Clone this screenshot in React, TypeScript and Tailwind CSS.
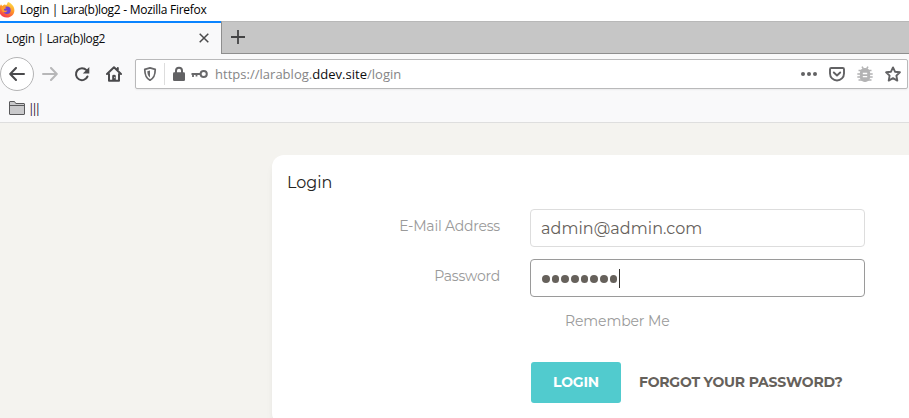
import React from "react";

function FirefoxLogo() {
  return (
    <svg width="17" height="17" viewBox="0 0 17 17" className="-ml-[2px] -mt-[3px] shrink-0">
      <defs>
        <linearGradient id="fire" x1="0.8" y1="0" x2="0.3" y2="1">
          <stop offset="0" stopColor="#ffe34a" />
          <stop offset="0.45" stopColor="#ff9a28" />
          <stop offset="1" stopColor="#f5334f" />
        </linearGradient>
      </defs>
      <path d="M3 3.2 4.2 5 6.3 3.6 8.5 4 10 1c3.6 1.4 6.4 4.4 6.4 8.2 0 4.2-3.3 7.3-7.6 7.3S1.100 13.300 1.100 9.200C1.100 7 1.900 5 3 3.200Z" fill="url(#fire)" />
      <circle cx="9" cy="9.200" r="3.700" fill="#7542d0" />
      <path d="M3.500 6.300c1.800-.8 3.700-.5 5 .9-1.600.1-2.500.7-2.600 1.700 1.300 1.300 2.700.6 3.600.7-.8 1.800-3 2.300-4.800 1.100C3.500 9.500 3.100 7.800 3.500 6.300Z" fill="#ff9b2c" />
    </svg>
  );
}

function TitleBar() {
  return (
    <div className="flex h-[21px] items-center bg-white">
      <FirefoxLogo />
      <span className="-mt-px ml-[5px] text-[12px] leading-[20px] tracking-[-0.28px] text-black">Login | Lara(b)log2 - Mozilla Firefox</span>
    </div>
  );
}

function TabStrip() {
  return (
    <div className="flex h-[33px]">
      <div className="flex w-[221px] items-center border-t-[2px] border-[#0a84ff] bg-[#f9f9fa] pl-[6px]">
        <span className="text-[12px] tracking-[-0.35px] text-[#0c0c0d]">Login | Lara(b)log2</span>
        <svg width="10" height="10" viewBox="0 0 10 10" className="-mt-px ml-auto mr-[12px]" stroke="#4a4a4b" strokeWidth="1.5" fill="none">
          <path d="M.7.7 9.300 9.300M9.300.7.7 9.300" />
        </svg>
      </div>
      <div className="flex flex-1 items-center border-y border-l border-t-[#b8b8b8] border-b-[#8e8e8e] border-l-[#8e8e8e] bg-[#c6c6c6] pl-[9px]">
        <svg width="14" height="14" viewBox="0 0 14 14" className="-mt-px" stroke="#434344" strokeWidth="1.800" fill="none">
          <path d="M7 0v14M0 7h14" />
        </svg>
      </div>
    </div>
  );
}

function AddressField() {
  return (
    <div className="ml-[13px] mr-px flex h-[30px] flex-1 items-center rounded-[2px] border border-[#b9b9ba] bg-white shadow-[0_1px_2px_rgba(0,0,0,0.06)]">
      <svg width="14" height="16" viewBox="0 0 14 16" className="ml-[7px]" fill="none">
        <path d="M7 1.800 12.200 3.300c0 5.200-.7 8.500-5.200 10.900C2.500 11.800 1.800 8.500 1.800 3.300Z" stroke="#68686a" strokeWidth="1.800" strokeLinejoin="round" />
        <path d="M7 4.500v7C5 10 4.400 8.300 4.300 5.200Z" fill="#68686a" />
      </svg>
      <span className="ml-[7px] h-[22px] w-px bg-[#dddddd]" />
      <svg width="12" height="16" viewBox="0 0 12 16" className="ml-[8px]">
        <path d="M3 7V4.700a3 3 0 0 1 6 0V7" fill="none" stroke="#626264" strokeWidth="2" />
        <rect y="6.300" width="12" height="8.700" rx="1.300" fill="#626264" />
      </svg>
      <svg width="17" height="10" viewBox="0 0 17 10" className="ml-[6px]" fill="none" stroke="#68686a">
        <circle cx="12.700" cy="5" r="3.100" strokeWidth="2" />
        <path d="M10 5H.5" strokeWidth="2" />
        <path d="M2 5v3M5.500 5v2.500" strokeWidth="1.800" />
      </svg>
      <span className="ml-[7px] whitespace-nowrap pt-[2px] font-['Open_Sans','Noto_Sans',sans-serif] text-[13px] tracking-[0.02px] text-[#858586]">
        https://larablog.<span className="text-[#0c0c0d]">ddev.site</span>/login
      </span>
      <div className="ml-auto mr-[6px] flex items-center">
        <svg width="16" height="4" viewBox="0 0 16 4" fill="#626264">
          <circle cx="2" cy="2" r="2" /><circle cx="8" cy="2" r="2" /><circle cx="14" cy="2" r="2" />
        </svg>
        <svg width="16" height="16" viewBox="0 0 16 16" className="ml-[12px]" fill="none" stroke="#626264" strokeWidth="1.900" strokeLinecap="round" strokeLinejoin="round">
          <path d="M2.300 2h11.400q1.300 0 1.300 1.300V7.500a7 7 0 0 1-14 0V3.300Q1 2 2.300 2Z" />
          <path d="m4.800 6.500 3.200 3 3.200-3" />
        </svg>
        <svg width="16" height="16" viewBox="0 0 16 16" className="ml-[12px]" stroke="#b3b3b4" strokeWidth="1.600">
          <path d="M1.500 4.500h13M.3 8h15.400M.3 11h15.400M1.500 14h13M5 .6l1.300 2M11 .6l-1.300 2" fill="none" />
          <rect x="3.700" y="2.800" width="8.600" height="12.400" rx="4" fill="#b3b3b4" />
          <path d="M5.800 7.500h4.400M5.800 10.700h4.400" stroke="#fff" strokeWidth="1.300" />
        </svg>
        <svg width="16" height="16" viewBox="0 0 16 16" className="ml-[12px]" fill="none" stroke="#626264" strokeWidth="1.900" strokeLinejoin="round">
          <path d="m8 1.400 2 4.300 4.900.6-3.500 3.300.9 5L8 12.200l-4.300 2.400.9-5L1.100 6.300 6 5.700Z" />
        </svg>
      </div>
    </div>
  );
}

function NavBar() {
  return (
    <div className="flex h-[40px] items-center">
      <div className="flex size-[34px] shrink-0 items-center justify-center rounded-full border border-[#b4b4b5] bg-white">
        <svg width="16" height="14" viewBox="0 0 16 14" fill="none" stroke="#4a4a4c" strokeWidth="2" strokeLinecap="round" strokeLinejoin="round">
          <path d="M7 1 1.200 7 7 13M1.500 7H15" />
        </svg>
      </div>
      <svg width="16" height="14" viewBox="0 0 16 14" className="ml-[8px]" fill="none" stroke="#b7b7b8" strokeWidth="2" strokeLinecap="round" strokeLinejoin="round">
        <path d="m9 1 5.800 6L9 13M14.500 7H1" />
      </svg>
      <svg width="16" height="16" viewBox="0 0 16 16" className="ml-[16px]" fill="none" stroke="#4a4a4c" strokeWidth="2" strokeLinecap="round">
        <path d="M13.500 10.500A6 6 0 1 1 12.500 4.200" />
        <path d="M15.300 1v6.500H8.800Z" fill="#4a4a4c" stroke="none" />
      </svg>
      <svg width="16" height="16" viewBox="0 0 16 16" className="ml-[16px]" fill="none" stroke="#4a4a4c" strokeWidth="2" strokeLinecap="round" strokeLinejoin="round">
        <path d="M1 8 8 1.300 15 8M3 8v6.700h10V8M11.800 2v2" />
        <path d="M6.200 14.500V10q0-1.300 1.800-1.300T9.800 10v4.500Z" fill="#4a4a4c" stroke="none" />
        <path d="M8.700 11.300v.5" stroke="#fff" strokeWidth=".8" />
      </svg>
      <AddressField />
    </div>
  );
}

function BookmarksBar() {
  return (
    <div className="flex h-[29px] items-center border-b border-[#dedede] pl-[9px]">
      <svg width="16" height="14" viewBox="0 0 16 14" fill="#c9c9cb" stroke="#59595b">
        <path d="M.5 13V1Q.5.5 1 .5h4.500l1.300 2H15q.5 0 .5.500v10q0 .5-.5.5H1q-.5 0-.5-.5Z" />
        <path d="M.8 4.500h14.500" fill="none" />
      </svg>
      <span className="ml-[3px] pt-[2px] text-[12px] tracking-[-3.3px] text-[#28102f]">|||</span>
    </div>
  );
}

const labelClass = "w-[228px] text-right text-[14px] leading-[20px] text-[#9a9a9a]";

function LoginCard() {
  return (
    <section className="ml-[272px] h-[270px] w-[700px] shrink-0 rounded-[12px] bg-white pt-[15px] font-['Montserrat','Lato',sans-serif] shadow-[0_6px_10px_-4px_rgba(0,0,0,0.15)]">
      <h1 className="pl-[15px] pt-px text-[16px] leading-[24px] tracking-[-0.05px] text-[#252422]">Login</h1>
      <form className="pt-[14px]" onSubmit={(event) => event.preventDefault()}>
        <div className="flex">
          <label className={labelClass}><span className="block pt-[7px] tracking-[-0.21px]">E-Mail Address</span></label>
          <div className="ml-[30px] flex h-[38px] w-[335px] items-center rounded-[4px] border border-[#dddddd] pl-[10px] pt-px text-[16px] tracking-[0.07px] text-[#66615b]">admin@admin.com</div>
        </div>
        <div className="mt-[12px] flex">
          <label className={labelClass}><span className="block pt-[7px] tracking-[-0.2px]">Password</span></label>
          <div className="ml-[30px] flex h-[38px] w-[335px] items-center rounded-[4px] border border-[#9a9a9a] pl-[11px]">
            <span className="flex gap-[2.2px] pt-[2px]">
              {Array.from({ length: 8 }, (_, i) => <i key={i} className="size-[7.5px] rounded-full bg-[#66615b]" />)}
            </span>
            <span className="ml-[2px] h-[19px] w-px bg-[#35322f]" />
          </div>
        </div>
        <div className="ml-[293px] mt-[14px] text-[14px] leading-[20px] tracking-[-0.12px] text-[#9a9a9a]">Remember Me</div>
        <div className="ml-[259px] mt-[31px] flex items-center">
          <button className="h-[41px] w-[90px] rounded-[3px] bg-[#51cbce] text-[14px] font-bold tracking-[-0.2px] text-white">LOGIN</button>
          <a className="ml-[18px] whitespace-nowrap text-[14px] font-bold tracking-[-0.21px] text-[#66615b]">FORGOT YOUR PASSWORD?</a>
        </div>
      </form>
    </section>
  );
}

export default function App() {
  return (
    <div className="flex h-[418px] w-[909px] flex-col overflow-hidden bg-[#f4f3ef] font-['Open_Sans','Noto_Sans',sans-serif]">
      <header className="shrink-0 bg-[#f9f9fa]">
        <TitleBar />
        <TabStrip />
        <NavBar />
        <BookmarksBar />
      </header>
      <main className="flex pt-[32px]">
        <LoginCard />
      </main>
    </div>
  );
}
